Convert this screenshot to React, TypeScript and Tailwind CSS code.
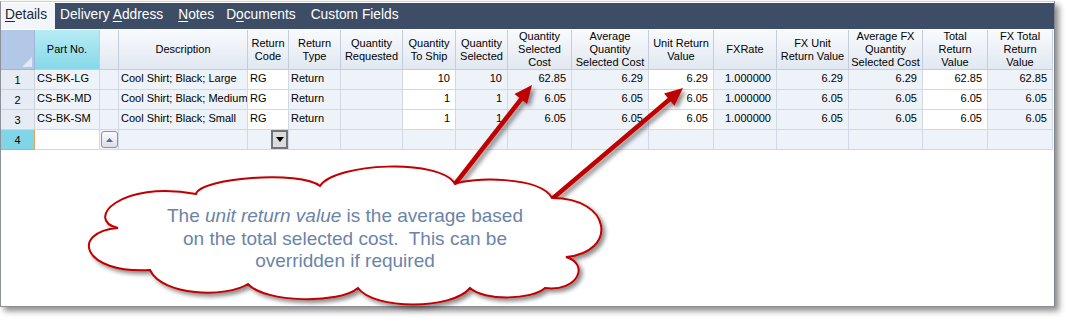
import React from 'react'

type Col = {
  key: string
  w: string
  head: string[]
  align: 'l' | 'r' | 'c'
  white?: boolean
}

const cols: Col[] = [
  { key: 'part', w: 'w-[65px]', head: ['Part No.'], align: 'l' },
  { key: 'btn', w: 'w-[19px]', head: [], align: 'c' },
  { key: 'desc', w: 'w-[129px]', head: ['Description'], align: 'l' },
  { key: 'rcode', w: 'w-[41px]', head: ['Return', 'Code'], align: 'l', white: true },
  { key: 'rtype', w: 'w-[52px]', head: ['Return', 'Type'], align: 'l' },
  { key: 'qreq', w: 'w-[62px]', head: ['Quantity', 'Requested'], align: 'r' },
  { key: 'qship', w: 'w-[53px]', head: ['Quantity', 'To Ship'], align: 'r', white: true },
  { key: 'qsel', w: 'w-[52px]', head: ['Quantity', 'Selected'], align: 'r' },
  { key: 'qcost', w: 'w-[64px]', head: ['Quantity', 'Selected', 'Cost'], align: 'r' },
  { key: 'avg', w: 'w-[77px]', head: ['Average', 'Quantity', 'Selected Cost'], align: 'r' },
  { key: 'unit', w: 'w-[65px]', head: ['Unit Return', 'Value'], align: 'r', white: true },
  { key: 'fx', w: 'w-[63px]', head: ['FXRate'], align: 'r' },
  { key: 'fxunit', w: 'w-[72px]', head: ['FX Unit', 'Return Value'], align: 'r' },
  { key: 'avgfx', w: 'w-[74px]', head: ['Average FX', 'Quantity', 'Selected Cost'], align: 'r' },
  { key: 'total', w: 'w-[65px]', head: ['Total', 'Return', 'Value'], align: 'r', white: true },
  { key: 'fxtotal', w: 'w-[65px]', head: ['FX Total', 'Return', 'Value'], align: 'r' },
]

const rows: Record<string, string>[] = [
  { part: 'CS-BK-LG', desc: 'Cool Shirt; Black; Large', rcode: 'RG', rtype: 'Return', qreq: '', qship: '10', qsel: '10', qcost: '62.85', avg: '6.29', unit: '6.29', fx: '1.000000', fxunit: '6.29', avgfx: '6.29', total: '62.85', fxtotal: '62.85' },
  { part: 'CS-BK-MD', desc: 'Cool Shirt; Black; Medium', rcode: 'RG', rtype: 'Return', qreq: '', qship: '1', qsel: '1', qcost: '6.05', avg: '6.05', unit: '6.05', fx: '1.000000', fxunit: '6.05', avgfx: '6.05', total: '6.05', fxtotal: '6.05' },
  { part: 'CS-BK-SM', desc: 'Cool Shirt; Black; Small', rcode: 'RG', rtype: 'Return', qreq: '', qship: '1', qsel: '1', qcost: '6.05', avg: '6.05', unit: '6.05', fx: '1.000000', fxunit: '6.05', avgfx: '6.05', total: '6.05', fxtotal: '6.05' },
]

function Tabs() {
  return (
    <div className="mt-[1px] h-[26px] bg-[#3e4d66] flex items-stretch text-[13.75px] leading-[16px] text-white">
      <div className="w-[54px] bg-[#f2f5fa] text-[#1c2636] flex items-center pl-[4px] pb-[2px]">
        <span><span className="underline underline-offset-2">D</span>etails</span>
      </div>
      <div className="flex items-center pb-[2px] ml-[5px]">
        <span>Delivery <span className="underline underline-offset-2">A</span>ddress</span>
      </div>
      <div className="flex items-center pb-[2px] ml-[15px]">
        <span><span className="underline underline-offset-2">N</span>otes</span>
      </div>
      <div className="flex items-center pb-[2px] ml-[12px]">
        <span>D<span className="underline underline-offset-2">o</span>cuments</span>
      </div>
      <div className="flex items-center pb-[2px] ml-[15px]">
        <span>Custom Fields</span>
      </div>
    </div>
  )
}

function HeaderRow() {
  return (
    <div className="flex h-[40px] text-[11px] leading-[13px] text-black">
      {/* corner cell */}
      <div className="w-[34px] shrink-0 relative bg-[#b3c7e7] border-r border-b border-[#9fb3d2]">
        <svg className="absolute right-[2px] bottom-[2px]" width="10" height="10" viewBox="0 0 10 10">
          <polygon points="10,0 10,10 0,10" fill="#dfe8f5" />
        </svg>
      </div>
      {cols.map(c => (
        <div
          key={c.key}
          className={`${c.w} shrink-0 flex items-center justify-center text-center border-r border-b border-[#c4cddb] ${
            c.key === 'part'
              ? 'bg-linear-to-b from-[#b6ecf4] to-[#86d8e8]'
              : 'bg-linear-to-b from-[#f8fafd] to-[#e2e8f1]'
          }`}
        >
          <div>
            {c.head.map(l => (
              <div key={l} className="whitespace-nowrap">{l}</div>
            ))}
          </div>
        </div>
      ))}
    </div>
  )
}

function DataRow({ n, r }: { n: number; r: Record<string, string> }) {
  return (
    <div className="flex h-[20px] text-[11px] leading-[13px] text-black">
      <div className="w-[34px] shrink-0 bg-[#e7ecf4] border-r border-b border-[#cdd5e1] text-center pt-[4px]">{n}</div>
      {cols.map(c => (
        <div
          key={c.key}
          className={`${c.w} shrink-0 border-r border-b border-[#d2d9e4] pt-[2px] whitespace-nowrap overflow-hidden ${
            c.white ? 'bg-white' : 'bg-[#eef2f9]'
          } ${c.align === 'r' ? 'text-right pr-[5px]' : 'pl-[2px]'}`}
        >
          {r[c.key]}
        </div>
      ))}
    </div>
  )
}

function NewRow() {
  return (
    <div className="flex h-[20px] text-[11px] leading-[13px] text-black">
      <div className="w-[34px] shrink-0 bg-[#80d6e7] border-r border-b border-[#e3a45c] text-center pt-[4px]">4</div>
      {cols.map(c => (
        <div
          key={c.key}
          className={`${c.w} shrink-0 border-r border-b border-[#d2d9e4] flex items-center ${
            c.key === 'part' ? 'bg-white' : 'bg-[#eef2f9]'
          } ${c.key === 'rcode' ? 'justify-end' : 'justify-center'}`}
        >
          {c.key === 'btn' && (
            <div className="w-[17px] h-[17px] rounded-[3px] border border-[#8c939e] bg-linear-to-b from-[#fafafa] to-[#dcdfe4] flex items-center justify-center">
              <svg width="7" height="4" viewBox="0 0 7 4">
                <polygon points="3.5,0 7,4 0,4" fill="#4b6fa8" />
              </svg>
            </div>
          )}
          {c.key === 'rcode' && (
            <div className="w-[17px] h-[19px] border-2 border-[#6f737a] bg-[#dcdcdc] flex items-center justify-center">
              <svg width="8" height="5" viewBox="0 0 8 5">
                <polygon points="0,0 8,0 4,5" fill="#000" />
              </svg>
            </div>
          )}
        </div>
      ))}
    </div>
  )
}

function Callout() {
  return (
    <>
      <svg className="absolute left-0 top-0 pointer-events-none" width="1068" height="322" viewBox="0 0 1068 322">
        <defs>
          <filter id="sh" x="-10%" y="-10%" width="130%" height="140%">
            <feDropShadow dx="3" dy="3" stdDeviation="2" floodColor="#000" floodOpacity="0.45" />
          </filter>
        </defs>
        <g filter="url(#sh)">
          <line x1="452" y1="188" x2="522" y2="98" stroke="#c00000" strokeWidth="4.5" />
          <polygon points="532,85 527.1,104.1 514.5,94.1" fill="#c00000" />
          <line x1="552" y1="199" x2="670" y2="99" stroke="#c00000" strokeWidth="4.5" />
          <polygon points="683,88 674.4,105.7 664.1,93.5" fill="#c00000" />
        </g>
        <path
          filter="url(#sh)"
          d="M196,194 C200,178 300,170 320,186 C335,163 440,158 455,184 C470,177 540,176 552,198 C612,198 618,252 566,257 C590,264 578,292 545,288 C532,300 484,301 470,288 C452,310 374,310 358,288 C340,304 265,303 248,284 C226,298 162,296 150,270 C82,274 70,232 118,228 C84,220 120,180 196,194 Z"
          fill="#ffffff"
          stroke="#c00000"
          strokeWidth="2"
        />
      </svg>
      <div className="absolute left-[145px] top-[205px] w-[400px] text-center text-[19px] leading-[22.5px] text-[#6a84a9]">
        <div className="whitespace-nowrap">The <i>unit return value</i> is the average based</div>
        <div className="whitespace-nowrap">on the total selected cost.&nbsp; This can be</div>
        <div className="whitespace-nowrap">overridden if required</div>
      </div>
    </>
  )
}

export default function App() {
  return (
    <div className="relative w-[1068px] h-[322px] bg-white overflow-hidden font-['Liberation_Sans',Arial,sans-serif]">
      <div className="mt-[1px] w-[1055px] h-[306px] bg-white border-t border-t-[#c6cfdc] border-l border-l-[#8c9098] border-r border-r-[#7e848d] border-b border-b-[#8c9098] shadow-[4px_4px_6px_rgba(0,0,0,0.45)] flex flex-col">
        <Tabs />
        <div className="mt-[1px]">
          <HeaderRow />
          {rows.map((r, i) => (
            <DataRow key={i} n={i + 1} r={r} />
          ))}
          <NewRow />
        </div>
      </div>
      <Callout />
    </div>
  )
}
